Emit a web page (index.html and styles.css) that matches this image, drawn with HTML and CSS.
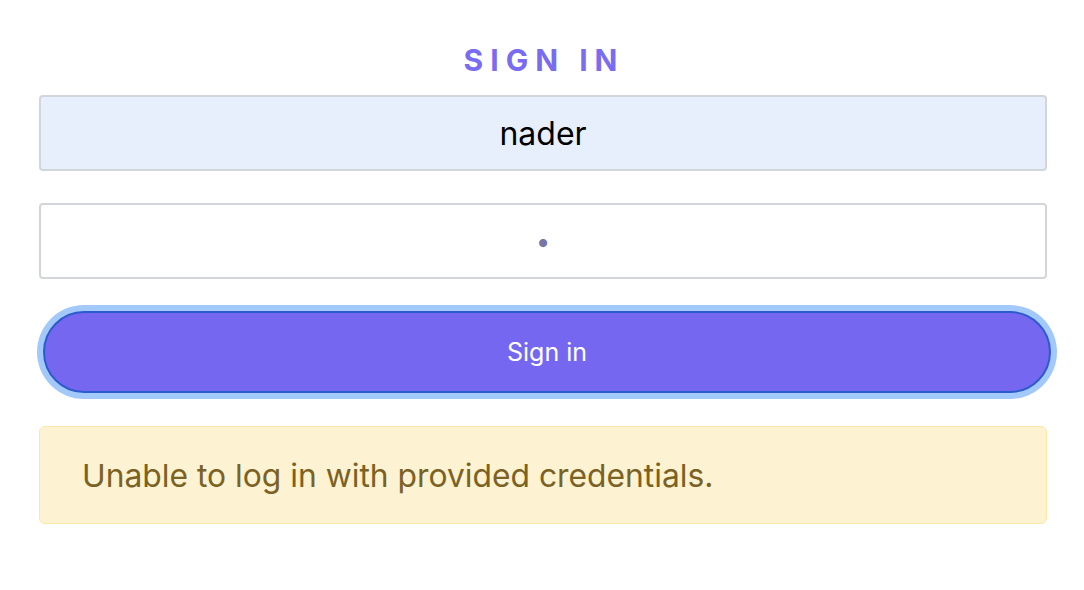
FILE: index.html
```html
<!DOCTYPE html>
<html>
<head>
<meta charset="utf-8">
<link rel="stylesheet" href="styles.css">
</head>
<body>
<main class="page">
  <form class="signin">
    <h1 class="title">SIGN IN</h1>
    <input class="field field-filled" type="text" value="nader">
    <input class="field" type="password" value="x">
    <button class="btn" type="button">Sign in</button>
    <div class="alert">Unable to log in with provided credentials.</div>
  </form>
</main>
</body>
</html>
```
FILE: styles.css
```css
html, body {
  margin: 0;
  padding: 0;
  background: #ffffff;
}
body {
  font-family: "Inter", "Noto Sans", "Liberation Sans", sans-serif;
}
.page {
  padding: 41px 37px 0 39px;
}
.signin {
  display: flex;
  flex-direction: column;
  align-items: flex-start;
  width: 1008px;
}
.title {
  align-self: stretch;
  margin: 0 0 16px 0;
  text-align: center;
  font-size: 30px;
  line-height: 38px;
  font-weight: 700;
  letter-spacing: 7px;
  padding-left: 2px;
  color: #7a6cf0;
}
.field {
  box-sizing: border-box;
  width: 1008px;
  height: 76px;
  margin: 0 0 32px 0;
  border: 2px solid #d2d5da;
  border-radius: 4px;
  background: #ffffff;
  text-align: center;
  font-family: inherit;
  font-size: 32px;
  color: #000000;
  outline: none;
  padding: 0;
}
.field-filled {
  background: #e8effc;
}
.field[type="password"] {
  color: #7777a6;
  font-size: 26px;
  margin-bottom: 32px;
}
.btn {
  box-sizing: border-box;
  width: 1008px;
  height: 82px;
  margin: 0 -4px 33px 4px;
  border: 2px solid #2c5ccb;
  border-radius: 41px;
  background: #7567f0;
  box-shadow: 0 0 0 6px #a3c9fa;
  color: #ffffff;
  font-family: inherit;
  font-size: 25px;
  padding: 0;
}
.alert {
  box-sizing: border-box;
  width: 1008px;
  height: 98px;
  display: flex;
  align-items: center;
  padding: 0 0 0 42px;
  background: #fdf2d1;
  border: 1px solid #f9e9a8;
  border-radius: 6px;
  color: #7b6224;
  font-size: 31.8px;
}
```
